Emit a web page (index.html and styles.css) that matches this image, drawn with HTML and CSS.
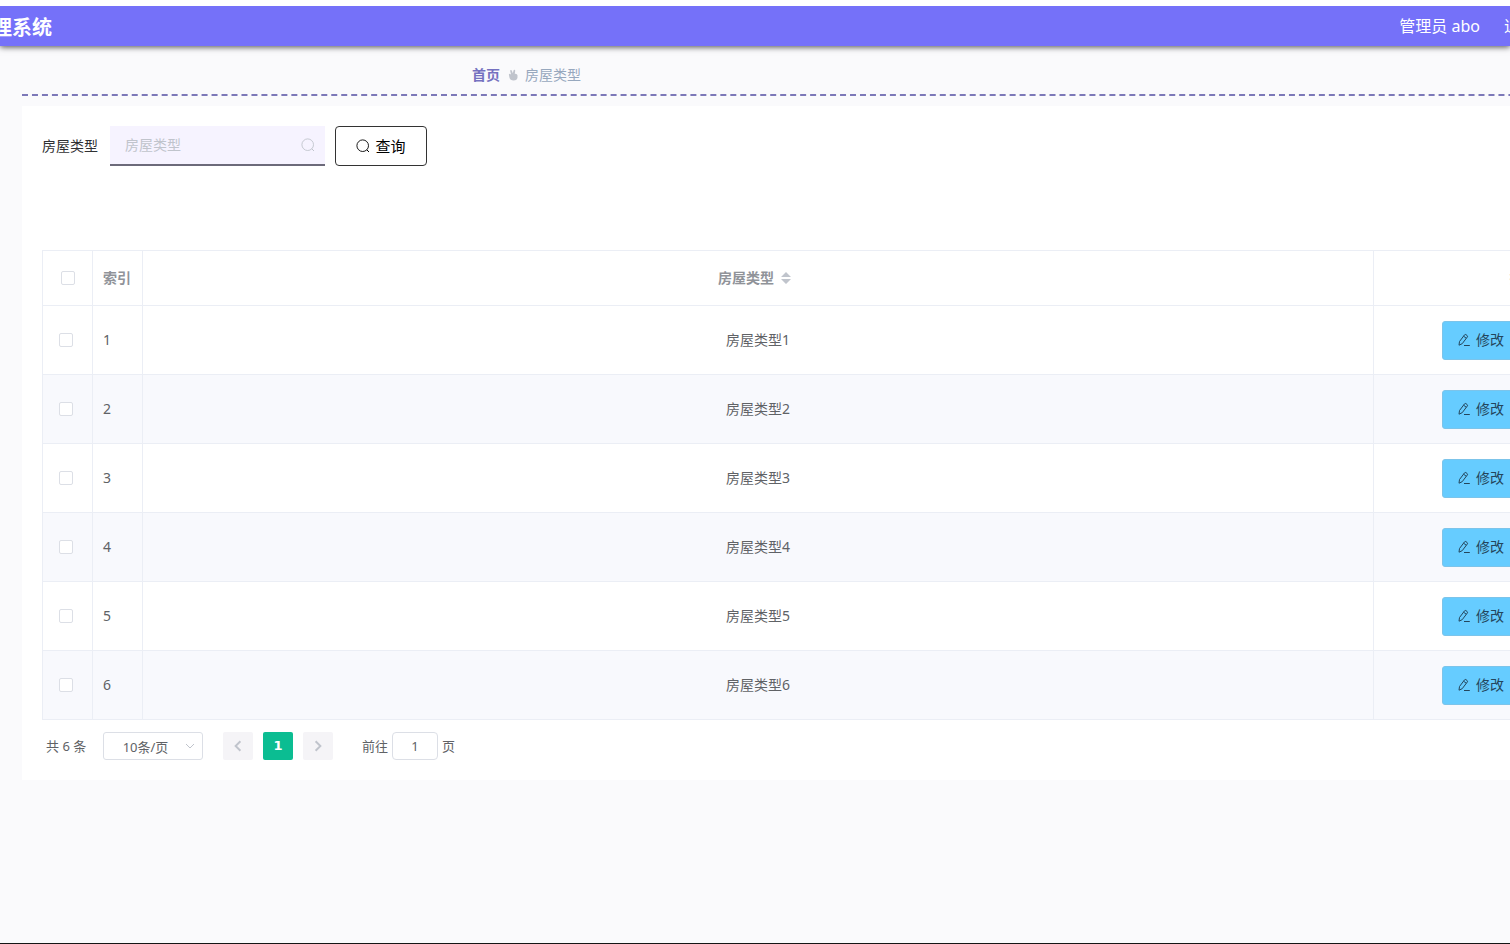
FILE: index.html
```html
<!DOCTYPE html>
<html lang="zh-CN">
<head>
<meta charset="utf-8">
<title>房屋类型</title>
<link rel="stylesheet" href="styles.css">
</head>
<body>
<svg class="defs" aria-hidden="true">
  <symbol id="search" viewBox="0 0 14 14"><circle cx="6.7" cy="6.7" r="5.8" fill="none" stroke="currentColor" stroke-width=".9"/><path d="M10.8 10.8L13 13" stroke="currentColor"/></symbol>
  <symbol id="edit" viewBox="0 0 14 14"><path d="M2 12.2L2.5 8.5 7.6 1.8Q8.2 1.1 9 1.7L10.2 2.6Q10.9 3.2 10.3 4L5.2 10.7ZM6.6 3.2L9.2 5.2M7 12.5H12.8" fill="none" stroke="currentColor"/></symbol>
</svg>
<div class="page">
  <header class="topbar">
    <div class="brand"><span>理系统</span></div>
    <div class="account">
      <span>管理员 abo</span>
      <a class="logout" href="#">退出登录</a>
    </div>
  </header>
  <main class="main">
    <nav class="crumbs">
      <a href="#">首页</a>
      <svg class="hand" viewBox="0 0 10 12"><path d="M1 6.2Q.6 5 1.6 4.8L3 5.6 2.2 2Q2.1 1 2.9.9 3.6.9 3.9 1.7L4.8 4.2 5.6 1.3Q5.9.5 6.6.7 7.3 1 7.2 1.8L6.8 4.8Q9.3 4.6 9.5 6.3V8.4Q9.2 11.4 5.6 11.5 2.2 11.4 1.5 8.8Z" fill="currentColor"/></svg>
      <span>房屋类型</span>
    </nav>
    <section class="panel">
      <form class="search">
        <label for="type">房屋类型</label>
        <div class="field">
          <input id="type" type="text" placeholder="房屋类型">
          <svg class="icon"><use href="#search"/></svg>
        </div>
        <button class="query" type="button"><svg class="icon"><use href="#search"/></svg>查询</button>
      </form>
      <table class="grid">
        <colgroup><col class="col-narrow"><col class="col-narrow"><col><col class="col-actions"></colgroup>
        <thead>
          <tr>
            <th class="all"><input type="checkbox" aria-label="全选"></th>
            <th class="index">索引</th>
            <th>房屋类型<svg class="sort" viewBox="0 0 10 12"><path d="M0 5L5 0L10 5ZM0 7H10L5 12Z" fill="currentColor"/></svg></th>
            <th>操作</th>
          </tr>
        </thead>
        <tbody>
          <tr><td class="pick"><input type="checkbox" aria-label="选择 1"></td><td class="index">1</td><td>房屋类型1</td><td class="actions"><button class="edit" type="button"><svg class="icon"><use href="#edit"/></svg>修改</button></td></tr>
          <tr><td class="pick"><input type="checkbox" aria-label="选择 2"></td><td class="index">2</td><td>房屋类型2</td><td class="actions"><button class="edit" type="button"><svg class="icon"><use href="#edit"/></svg>修改</button></td></tr>
          <tr><td class="pick"><input type="checkbox" aria-label="选择 3"></td><td class="index">3</td><td>房屋类型3</td><td class="actions"><button class="edit" type="button"><svg class="icon"><use href="#edit"/></svg>修改</button></td></tr>
          <tr><td class="pick"><input type="checkbox" aria-label="选择 4"></td><td class="index">4</td><td>房屋类型4</td><td class="actions"><button class="edit" type="button"><svg class="icon"><use href="#edit"/></svg>修改</button></td></tr>
          <tr><td class="pick"><input type="checkbox" aria-label="选择 5"></td><td class="index">5</td><td>房屋类型5</td><td class="actions"><button class="edit" type="button"><svg class="icon"><use href="#edit"/></svg>修改</button></td></tr>
          <tr><td class="pick"><input type="checkbox" aria-label="选择 6"></td><td class="index">6</td><td>房屋类型6</td><td class="actions"><button class="edit" type="button"><svg class="icon"><use href="#edit"/></svg>修改</button></td></tr>
        </tbody>
      </table>
      <div class="pager">
        <span class="total">共 6 条</span>
        <div class="size">
          <select aria-label="每页条数"><option>10条/页</option></select>
          <svg class="chevron" viewBox="0 0 10 10"><path d="M1 3L5 7L9 3" fill="none" stroke="currentColor"/></svg>
        </div>
        <div class="pages">
          <button type="button" aria-label="上一页" disabled><svg viewBox="0 0 10 10"><path d="M7 1L3 5L7 9" fill="none" stroke="currentColor" stroke-width="1.6"/></svg></button>
          <button type="button" class="current">1</button>
          <button type="button" aria-label="下一页" disabled><svg viewBox="0 0 10 10"><path d="M3 1L7 5L3 9" fill="none" stroke="currentColor" stroke-width="1.6"/></svg></button>
        </div>
        <div class="jump"><label for="goto">前往</label><input id="goto" type="text" value="1"><span>页</span></div>
      </div>
    </section>
  </main>
</div>
</body>
</html>
```

FILE: styles.css
```css
* { box-sizing: border-box; }
body {
  margin: 0;
  font: 14px/20px "Noto Sans", "Noto Sans CJK SC", sans-serif;
  color: #606266;
  background: #fafafc;
}
button, input, select { font: inherit; color: inherit; margin: 0; }
.defs { display: none; }
.icon { width: 14px; height: 14px; flex: none; }

.page {
  min-height: 100vh;
  overflow: hidden;
  border-top: 6px solid #fff;
  border-bottom: 1px solid #151515;
}
.topbar {
  display: flex;
  justify-content: space-between;
  align-items: center;
  height: 40px;
  color: #fff;
  background: #7571f9;
  box-shadow: 0 1px 6px rgba(0, 0, 0, 0.7);
}
.brand {
  display: flex;
  justify-content: flex-end;
  width: 52px;
  padding-top: 3px;
  overflow: hidden;
  white-space: nowrap;
  font-size: 20px;
  line-height: 30px;
  font-weight: 700;
}
.account {
  display: flex;
  gap: 24px;
  margin-right: -58px;
  font-size: 16px;
  white-space: nowrap;
}
.logout { color: inherit; text-decoration: none; }

.main { margin: 0 -184px 0 22px; }
.crumbs {
  display: flex;
  align-items: center;
  height: 50px;
  padding: 10px 0 0 450px;
  border-bottom: 2px dashed #7c78b8;
  color: #97a8be;
}
.crumbs a { color: #7571c0; font-weight: 700; text-decoration: none; }
.hand { width: 10px; height: 12px; margin: 0 7px 0 8px; color: #c0c4cc; }

.panel { margin-top: 10px; padding: 20px; background: #fff; }
.search { display: flex; align-items: center; color: #303133; }
.field {
  display: flex;
  align-items: center;
  width: 215px;
  height: 40px;
  margin: 0 10px 0 12px;
  padding: 0 10px 0 15px;
  background: #f6f3ff;
  border-bottom: 2px solid #6c6a7a;
  color: #c0c4cc;
}
.field input { flex: 1; min-width: 0; padding: 0; border: 0; outline: 0; background: none; color: #303133; }
.field input::placeholder { color: #c0c4cc; }
.query {
  display: flex;
  align-items: center;
  justify-content: center;
  gap: 5px;
  width: 92px;
  height: 40px;
  padding: 0;
  border: 1px solid #333;
  border-radius: 4px;
  background: #fff;
  color: #000;
  font-size: 15px;
}

.grid {
  width: 100%;
  margin-top: 84px;
  table-layout: fixed;
  border-collapse: separate;
  border-spacing: 0;
  border-top: 1px solid #ebeef5;
  border-left: 1px solid #ebeef5;
}
.col-narrow { width: 50px; }
.col-actions { width: 300px; }
.grid th, .grid td {
  padding: 0 10px;
  border-right: 1px solid #ebeef5;
  border-bottom: 1px solid #ebeef5;
  text-align: center;
  vertical-align: middle;
}
.grid th { height: 55px; color: #909399; font-weight: 700; }
.grid td { height: 69px; }
.grid .index { text-align: left; white-space: nowrap; }
.grid th.index { padding-right: 0; }
.grid .pick { padding: 0 16px; text-align: left; }
.grid tbody tr:nth-child(even) { background: #f8f9fd; }
.grid input {
  appearance: none;
  display: block;
  width: 14px;
  height: 14px;
  border: 1px solid #dcdfe6;
  border-radius: 2px;
  background: #fff;
}
.grid .all { padding: 0 18px; }
.sort { width: 10px; height: 12px; margin: 0 7px; color: #c0c4cc; vertical-align: -1px; }
.grid .actions { padding: 0 68px; }
.edit {
  display: flex;
  align-items: center;
  gap: 5px;
  height: 39px;
  padding: 0 14px;
  border: 1px solid #7cc4ea;
  border-radius: 3px;
  background: #66ccff;
  color: #24465c;
  white-space: nowrap;
}

.pager {
  display: flex;
  align-items: center;
  margin-top: 12px;
  padding-left: 4px;
  font-size: 13px;
  line-height: 28px;
}
.total { width: 57px; }
.size { display: grid; width: 100px; align-items: center; }
.size select, .size svg { grid-area: 1 / 1; }
.size select {
  appearance: none;
  width: 100%;
  height: 28px;
  padding: 0 25px 0 10px;
  border: 1px solid #dcdfe6;
  border-radius: 3px;
  background: #fff;
  text-align: center;
}
.chevron { width: 10px; height: 10px; margin-right: 8px; justify-self: end; color: #c0c4cc; pointer-events: none; }
.pages { display: flex; gap: 10px; margin: 0 29px 0 20px; }
.pages button {
  display: flex;
  align-items: center;
  justify-content: center;
  width: 30px;
  height: 28px;
  padding: 0;
  border: 0;
  border-radius: 2px;
  background: #f5f4f7;
  color: #c0c4cc;
}
.pages svg { width: 12px; height: 12px; }
.pages .current { background: #0bbd92; color: #fff; font-family: "DejaVu Sans", sans-serif; font-weight: 700; }
.jump { display: flex; align-items: center; gap: 4px; }
.jump input {
  width: 46px;
  height: 28px;
  padding: 0;
  border: 1px solid #dcdfe6;
  border-radius: 4px;
  background: #fff;
  text-align: center;
}
```
